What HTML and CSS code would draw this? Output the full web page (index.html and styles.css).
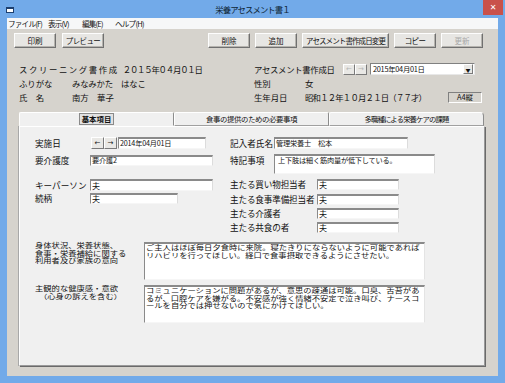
FILE: index.html
```html
<!DOCTYPE html>
<html lang="ja">
<head>
    <meta charset="UTF-8">
    <title>栄養アセスメント書１</title>
    <link rel="stylesheet" href="styles.css">
</head>
<body>
<div class="titlebar">
    <span class="app-icon">
        <svg width="8" height="6" viewBox="0 0 8 6"><rect x="0.5" y="0.5" width="7" height="5" fill="#fff" stroke="#1d3f6e"/><rect x="0.5" y="0.5" width="7" height="1.5" fill="#1d3f6e"/></svg>
    </span>
    <span class="title">栄養アセスメント書１</span>
    <span class="close">✕</span>
</div>
<div class="frame">
    <div class="client">
        <div class="menubar">
            <span class="menu m1">ファイル(F)</span>
            <span class="menu m2">表示(V)</span>
            <span class="menu m3">編集(E)</span>
            <span class="menu">ヘルプ(H)</span>
        </div>

        <div class="toolbar">
            <div class="group">
                <button class="btn">印刷</button>
                <button class="btn kana">プレビュー</button>
            </div>
            <div class="group">
                <button class="btn">削除</button>
                <button class="btn">追加</button>
                <button class="btn kana wide">アセスメント書作成日変更</button>
                <button class="btn kana">コピー</button>
                <button class="btn disabled">更新</button>
            </div>
        </div>

        <div class="header">
            <div class="header-left">
                <div class="hrow"><span class="screening">スクリーニング書作成</span><span class="date-big">２０１５年０４月０１日</span></div>
                <div class="hrow"><span class="hlabel">ふりがな</span><span class="kana-name">みなみかた　はなこ</span></div>
                <div class="hrow"><span class="hlabel">氏　名</span><span>南方　華子</span></div>
            </div>
            <div class="header-right">
                <div class="hrow">
                    <span class="assess-label">アセスメント書作成日</span>
                    <span class="arrows top-arrows"><span class="arrow-btn faint">←</span><span class="arrow-btn faint">→</span></span>
                    <span class="combo"><span class="combo-text">2015年04月01日</span><span class="combo-btn">▼</span></span>
                </div>
                <div class="hrow"><span class="rlabel">性別</span><span>女</span></div>
                <div class="hrow"><span class="rlabel">生年月日</span><span class="birth">昭和１２年１０月２１日（７７才）</span><span class="paper">A4縦</span></div>
            </div>
        </div>

        <div class="tabs">
            <div class="tab active"><span class="tab-focus">基本項目</span></div>
            <div class="tab tab2">食事の提供のための必要事項</div>
            <div class="tab tab3">多職種による栄養ケアの課題</div>
        </div>

        <div class="panel">
            <div class="upper">
                <div class="col-left">
                    <div class="frow">
                        <span class="lbl">実施日</span>
                        <span class="arrows"><span class="arrow-btn">←</span><span class="arrow-btn">→</span></span>
                        <span class="field small w-date">2014年04月01日</span>
                    </div>
                    <div class="frow r-care">
                        <span class="lbl">要介護度</span>
                        <span class="field small w-long">要介護2</span>
                    </div>
                    <div class="frow r-key">
                        <span class="lbl">キーパーソン</span>
                        <span class="field w-long">夫</span>
                    </div>
                    <div class="frow r-rel">
                        <span class="lbl">続柄</span>
                        <span class="field w-short">夫</span>
                    </div>
                </div>
                <div class="col-right">
                    <div class="frow">
                        <span class="lbl-s">記入者氏名</span>
                        <span class="field small w-writer">管理栄養士　松本</span>
                    </div>
                    <div class="frow r-note">
                        <span class="lbl-s">特記事項</span>
                        <span class="field small w-note">上下肢は細く筋肉量が低下している。</span>
                    </div>
                    <div class="frow r-main first">
                        <span class="lbl-m">主たる買い物担当者</span>
                        <span class="field w-main">夫</span>
                    </div>
                    <div class="frow r-main second">
                        <span class="lbl-m">主たる食事準備担当者</span>
                        <span class="field w-main">夫</span>
                    </div>
                    <div class="frow r-main">
                        <span class="lbl-m">主たる介護者</span>
                        <span class="field w-main">夫</span>
                    </div>
                    <div class="frow r-main">
                        <span class="lbl-m">主たる共食の者</span>
                        <span class="field w-main">夫</span>
                    </div>
                </div>
            </div>

            <div class="lower">
                <div class="trow">
                    <div class="tlabel"><div class="squash">身体状況、栄養状態、<br>食事・栄養補給に関する<br>利用者及び家族の意向</div></div>
                    <div class="tarea"><div class="squash">ご主人はほぼ毎日夕食時に来院。寝たきりにならないように可能であれば<br>リハビリを行ってほしい。経口で食事摂取できるようにさせたい。</div></div>
                </div>
                <div class="trow">
                    <div class="tlabel"><div class="squash">主観的な健康感・意欲<br><span class="indent">（心身の訴えを含む）</span></div></div>
                    <div class="tarea"><div class="squash">コミュニケーションに問題があるが、意思の疎通は可能。口臭、舌苔があ<br>るが、口腔ケアを嫌がる。不安感が強く情緒不安定で泣き叫び、ナースコ<br>ールを自分では押せないので気にかけてほしい。</div></div>
                </div>
            </div>
        </div>
    </div>
</div>
</body>
</html>
```

FILE: styles.css
```css
* {
    box-sizing: border-box;
}
body {
    margin: 0;
    width: 505px;
    height: 383px;
    overflow: hidden;
    font-family: "Noto Sans CJK JP", "Noto Sans", sans-serif;
    font-size: 8.6px;
    line-height: 1;
    color: #111;
    background-color: #72aae9;
}
.titlebar {
    height: 18px;
    display: grid;
    grid-template-columns: 1fr auto 1fr;
    align-items: center;
}
.app-icon {
    padding-left: 6px;
    padding-top: 2px;
    display: flex;
}
.title {
    font-size: 8.4px;
    letter-spacing: -0.9px;
    color: #0d1f33;
}
.close {
    justify-self: end;
    align-self: start;
    width: 20px;
    height: 15px;
    margin-right: 2px;
    background-color: #c9514b;
    color: #fff;
    font-size: 8px;
    font-family: "DejaVu Sans", sans-serif;
    display: flex;
    align-items: center;
    justify-content: center;
}
.frame {
    padding: 0 7px 7px 7px;
}
.client {
    height: 358px;
    background-color: #d6d3cd;
}
.menubar {
    height: 11px;
    background-color: #f6f7f8;
    display: flex;
    align-items: center;
    padding-left: 1px;
    font-size: 7.6px;
    letter-spacing: -0.8px;
}
.menu {
    display: inline-block;
}
.m1 {
    width: 40px;
}
.m2 {
    width: 34px;
}
.m3 {
    width: 33px;
}
.toolbar {
    display: flex;
    justify-content: space-between;
    margin-top: 4px;
    height: 15px;
    padding: 0 15px 0 7px;
}
.group {
    display: flex;
    gap: 5px;
}
.group:first-child {
    gap: 6px;
}
.btn {
    width: 42px;
    height: 15px;
    padding: 0;
    font-family: inherit;
    font-size: 7.5px;
    color: #111;
    background-color: #e7e6e3;
    border: 1px solid;
    border-color: #fdfdfd #707070 #707070 #fdfdfd;
    box-shadow: inset -1px -1px 0 #b5b3ae;
}
.btn.kana {
    letter-spacing: -0.6px;
}
.btn.wide {
    width: 87px;
    letter-spacing: -0.9px;
}
.btn.disabled {
    color: #a8a8a8;
}
.header {
    margin-top: 14px;
    height: 42px;
    display: flex;
    padding: 0 14px 0 12px;
    font-size: 8.4px;
}
.header-left {
    width: 235px;
}
.header-right {
    flex: 1;
}
.hrow {
    height: 14px;
    display: flex;
    align-items: center;
}
.screening {
    letter-spacing: 1.6px;
}
.date-big {
    margin-left: 4px;
    letter-spacing: -1.2px;
}
.hlabel {
    width: 53px;
}
.kana-name {
    letter-spacing: -0.2px;
}
.assess-label {
    width: 89px;
    letter-spacing: -0.3px;
}
.arrows {
    display: flex;
}
.arrow-btn {
    width: 13px;
    height: 12px;
    display: flex;
    align-items: center;
    justify-content: center;
    font-size: 7px;
    font-family: "DejaVu Sans", sans-serif;
    background-color: #e9e8e5;
    border: 1px solid;
    border-color: #fff #7a7a7a #7a7a7a #fff;
}
.top-arrows .arrow-btn {
    width: 12px;
    height: 11px;
}
.arrow-btn.faint {
    color: #b4b4b4;
}
.combo {
    margin-left: 3px;
    width: 105px;
    height: 12px;
    display: flex;
    align-items: center;
    justify-content: space-between;
    background-color: #fff;
    border: 1px solid;
    border-color: #808080 #e8e8e8 #e8e8e8 #808080;
    padding-left: 2px;
}
.combo-text {
    font-size: 7.4px;
    letter-spacing: -0.3px;
}
.combo-btn {
    width: 10px;
    height: 10px;
    font-size: 5px;
    display: flex;
    align-items: center;
    justify-content: center;
    background-color: #e9e8e5;
    border: 1px solid;
    border-color: #fff #7a7a7a #7a7a7a #fff;
    margin-right: 1px;
}
.rlabel {
    width: 51px;
}
.birth {
    letter-spacing: -0.8px;
}
.paper {
    margin-left: auto;
    margin-right: 2px;
    width: 34px;
    height: 11px;
    font-size: 7.4px;
    display: flex;
    align-items: center;
    justify-content: center;
    border: 1px solid;
    border-color: #808080 #fff #fff #808080;
}
.tabs {
    margin-top: 8px;
    margin-left: 12px;
    height: 14px;
    display: flex;
    position: relative;
    z-index: 1;
}
.tab {
    width: 155px;
    height: 14px;
    display: flex;
    align-items: center;
    justify-content: center;
    font-size: 7.4px;
    background-color: #efefef;
    border: 1px solid;
    border-color: #fff #8c8c8c #a0a0a0 #fff;
    border-radius: 2px 2px 0 0;
    letter-spacing: -0.4px;
}
.tab.active {
    border-bottom-color: #f0f0f0;
    background-color: #f0f0f0;
}
.tab-focus {
    padding: 1px 2px;
    border: 1px solid #8a8a8a;
    background-color: #e2e2e2;
    font-weight: bold;
    letter-spacing: 0;
}
.tab3 {
    width: 155px;
    letter-spacing: -0.9px;
    border-radius: 2px 4px 0 0;
}
.panel {
    margin-left: 12px;
    width: 466px;
    height: 240px;
    background-color: #f0f0f0;
    border: 1px solid;
    border-color: #fff #9a9a9a #9a9a9a #fff;
    box-shadow: 1px 1px 0 #6a6a6a, -1px 0 0 #a8a8a8;
    padding: 10px 0 0 15px;
}
.upper {
    display: flex;
}
.col-left {
    width: 178px;
}
.col-right {
    margin-left: 17px;
}
.frow {
    display: flex;
    align-items: center;
    height: 12px;
}
.lbl {
    width: 55px;
}
.col-left .frow:first-child .lbl {
    width: 56px;
}
.lbl-s {
    width: 44px;
}
.lbl-m {
    width: 87px;
    letter-spacing: -0.15px;
}
.r-care {
    margin-top: 6px;
    height: 11px;
}
.r-key {
    margin-top: 13px;
}
.r-rel {
    margin-top: 2px;
    height: 11px;
}
.r-note {
    margin-top: 5px;
    height: 20px;
    align-items: flex-start;
}
.r-note .lbl-s {
    margin-top: 2px;
}
.r-main {
    margin-top: 3px;
    height: 11px;
}
.r-main.first {
    margin-top: 5px;
}
.r-main.second {
    margin-top: 4px;
}
.field {
    height: 100%;
    display: flex;
    align-items: center;
    padding-left: 1px;
    background-color: #fff;
    border-style: solid;
    border-width: 2px 1px 1px 1px;
    border-color: #8a8a8a #dcdcdc #f6f6f6 #8a8a8a;
    font-size: 8px;
}
.field.small {
    font-size: 7.2px;
    letter-spacing: -0.2px;
}
.w-date {
    width: 88px;
    margin-left: 1px;
}
.w-long {
    width: 123px;
}
.w-short {
    width: 88px;
}
.w-writer {
    width: 134px;
}
.w-note {
    width: 161px;
    align-items: flex-start;
    padding-top: 1px;
    padding-left: 3px;
}
.w-main {
    width: 82px;
}
.lower {
    margin-top: 9px;
}
.trow {
    display: flex;
    height: 38px;
    margin-bottom: 5px;
}
.tlabel {
    width: 109px;
    font-size: 8.3px;
}
.squash {
    transform: scaleY(0.8);
    transform-origin: top left;
    line-height: 8.8px;
    white-space: nowrap;
}
.indent {
    padding-left: 4px;
}
.tarea {
    width: 281px;
    height: 38px;
    background-color: #fff;
    border-style: solid;
    border-width: 2px 1px 1px 1px;
    border-color: #8a8a8a #e4e4e4 #f6f6f6 #8a8a8a;
    padding-left: 1px;
    font-size: 8.3px;
    overflow: hidden;
}
```
